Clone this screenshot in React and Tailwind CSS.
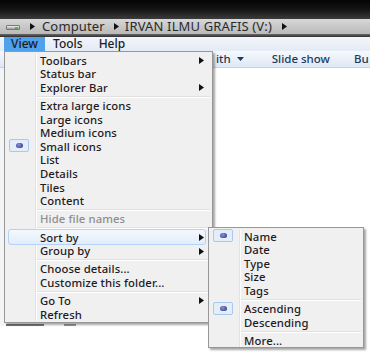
import React from 'react';

// Menu "View" ala Windows 7 Explorer
const mainItems = [
  { label: 'Toolbars', arrow: true },
  { label: 'Status bar' },
  { label: 'Explorer Bar', arrow: true },
  { sep: true },
  { label: 'Extra large icons' },
  { label: 'Large icons' },
  { label: 'Medium icons' },
  { label: 'Small icons', checked: true },
  { label: 'List' },
  { label: 'Details' },
  { label: 'Tiles' },
  { label: 'Content' },
  { sep: true },
  { label: 'Hide file names', disabled: true },
  { sep: true },
  { label: 'Sort by', arrow: true, hover: true },
  { label: 'Group by', arrow: true },
  { sep: true },
  { label: 'Choose details...' },
  { label: 'Customize this folder...' },
  { sep: true },
  { label: 'Go To', arrow: true },
  { label: 'Refresh' },
];

const sortItems = [
  { label: 'Name', checked: true },
  { label: 'Date' },
  { label: 'Type' },
  { label: 'Size' },
  { label: 'Tags' },
  { sep: true },
  { label: 'Ascending', checked: true },
  { label: 'Descending' },
  { sep: true },
  { label: 'More...' },
];

const Tri = ({ className = '', style }) => (
  <svg width="5" height="7" viewBox="0 0 5 7" className={className} style={style}>
    <path d="M0 0 L5 3.5 L0 7 Z" fill="#111" />
  </svg>
);

const Bullet = () => (
  <div className="w-[20px] h-[13px] rounded-[2px] border border-[#a9c8ee] bg-[#e4eefb] flex items-center justify-center">
    <div className="w-[7px] h-[5px] rounded-full bg-[radial-gradient(circle_at_40%_35%,#8a92d8,#2b2f86)]" />
  </div>
);

const MenuList = ({ items, gutter, arrowX }) => (
  <div className="relative">
    {/* garis vertikal gutter */}
    <div className="absolute top-0 bottom-0 border-l border-[#e2e2e2] border-r-white border-r" style={{ left: gutter }} />
    {items.map((it, i) =>
      it.sep ? (
        <div key={i} className="h-[4.6px] flex items-center" style={{ paddingLeft: gutter + 2 }}>
          <div className="w-full mr-[2px] border-t border-[#e0e0e0] border-b border-b-white" />
        </div>
      ) : (
        <div key={i} className="relative h-[13.6px] flex items-center">
          {it.hover && (
            <div className="absolute left-[3px] right-[6px] top-[-1px] bottom-[-1px] rounded-[3px] border border-[#b3d2f5] bg-gradient-to-b from-[#f4f8fd] to-[#e2edfb]" />
          )}
          {it.checked && (
            <div className="absolute left-[4px] top-[-0.5px]">
              <Bullet />
            </div>
          )}
          <span
            className={`relative whitespace-nowrap text-[11.3px] leading-none font-medium tracking-[0.1px] ${it.disabled ? 'text-[#8e8e8e]' : 'text-[#231a1e]'}`}
            style={{ marginLeft: gutter + 5 }}
          >
            {it.label}
          </span>
          {it.arrow && <Tri className="absolute top-[3.5px]" style={{ left: arrowX }} />}
        </div>
      )
    )}
  </div>
);

export default function App() {
  return (
    <div className="relative w-[370px] h-[355px] bg-white overflow-hidden font-['Noto_Sans',sans-serif]">
      {/* header gelap */}
      <div className="h-[19px] bg-gradient-to-b from-[#050505] via-[#151515] to-[#3c3c3c]" />
      {/* address bar */}
      <div className="h-[15px] bg-gradient-to-b from-[#d8d8d8] to-[#b9b9b9] flex items-center text-[13px] tracking-[0.15px] text-[#2a2a2a] whitespace-nowrap">
        <div className="ml-[6px] w-[14px] h-[5px] mt-[2px] rounded-[1px] bg-gradient-to-b from-[#f2f2f2] to-[#9a9a9a] border border-[#777] relative">
          <div className="absolute right-[1px] top-[1px] w-[3px] h-[2px] bg-[#3bc43b]" />
        </div>
        <Tri className="ml-[10px]" />
        <span className="ml-[7px]">Computer</span>
        <Tri className="ml-[9px]" />
        <span className="ml-[6px]">IRVAN ILMU GRAFIS (V:)</span>
        <Tri className="ml-[10px]" />
      </div>
      <div className="h-[3px] bg-gradient-to-b from-[#6a6a6a] to-[#2e2e2e]" />
      {/* menu bar */}
      <div className="h-[14px] bg-gradient-to-b from-[#f2f5fa] to-[#e4ebf5] flex items-stretch text-[12px] text-[#1c1c1c] font-medium">
        <div className="ml-[4px] w-[41px] bg-[#4fa1eb] flex items-center justify-center">View</div>
        <div className="ml-[8px] flex items-center">Tools</div>
        <div className="ml-[16px] flex items-center">Help</div>
      </div>
      {/* toolbar */}
      <div className="h-[17px] bg-gradient-to-b from-[#f6f9fd] to-[#dde8f5] border-b border-[#c5d3e4] flex items-center text-[11.5px] text-[#1e395b] font-medium whitespace-nowrap">
        <span className="ml-[216px] shrink-0">ith</span>
        <svg width="7" height="4" viewBox="0 0 7 4" className="ml-[6px] shrink-0"><path d="M0 0 L7 0 L3.5 4 Z" fill="#1e395b" /></svg>
        <span className="ml-[28px] shrink-0">Slide show</span>
        <span className="ml-[24px] shrink-0">Bu</span>
      </div>
      {/* isi folder di belakang menu */}
      <div className="flex">
        <div className="w-[4px] h-[258px] bg-[#f3f4f6]" />
      </div>
      <div className="flex items-start gap-[20px] ml-[6px] mt-[-2px]">
        <div className="w-[38px] h-[2px] bg-[#7a7a7a]" />
        <div className="w-[12px] h-[2px] bg-[#9a9a9a]" />
      </div>

      {/* dropdown View */}
      <div className="absolute left-[4px] top-[51px] w-[209px] h-[272px] bg-[#f0f0f0] border border-[#979797] shadow-[2px_2px_2px_rgba(0,0,0,0.35)] pt-[1.5px]">
        <MenuList items={mainItems} gutter={30} arrowX={194} />
      </div>

      {/* submenu Sort by */}
      <div className="absolute left-[208px] top-[227px] w-[156px] h-[121px] bg-[#f0f0f0] border border-[#979797] shadow-[2px_2px_2px_rgba(0,0,0,0.35)] pt-[1.5px]">
        <MenuList items={sortItems} gutter={30} arrowX={140} />
      </div>
    </div>
  );
}
